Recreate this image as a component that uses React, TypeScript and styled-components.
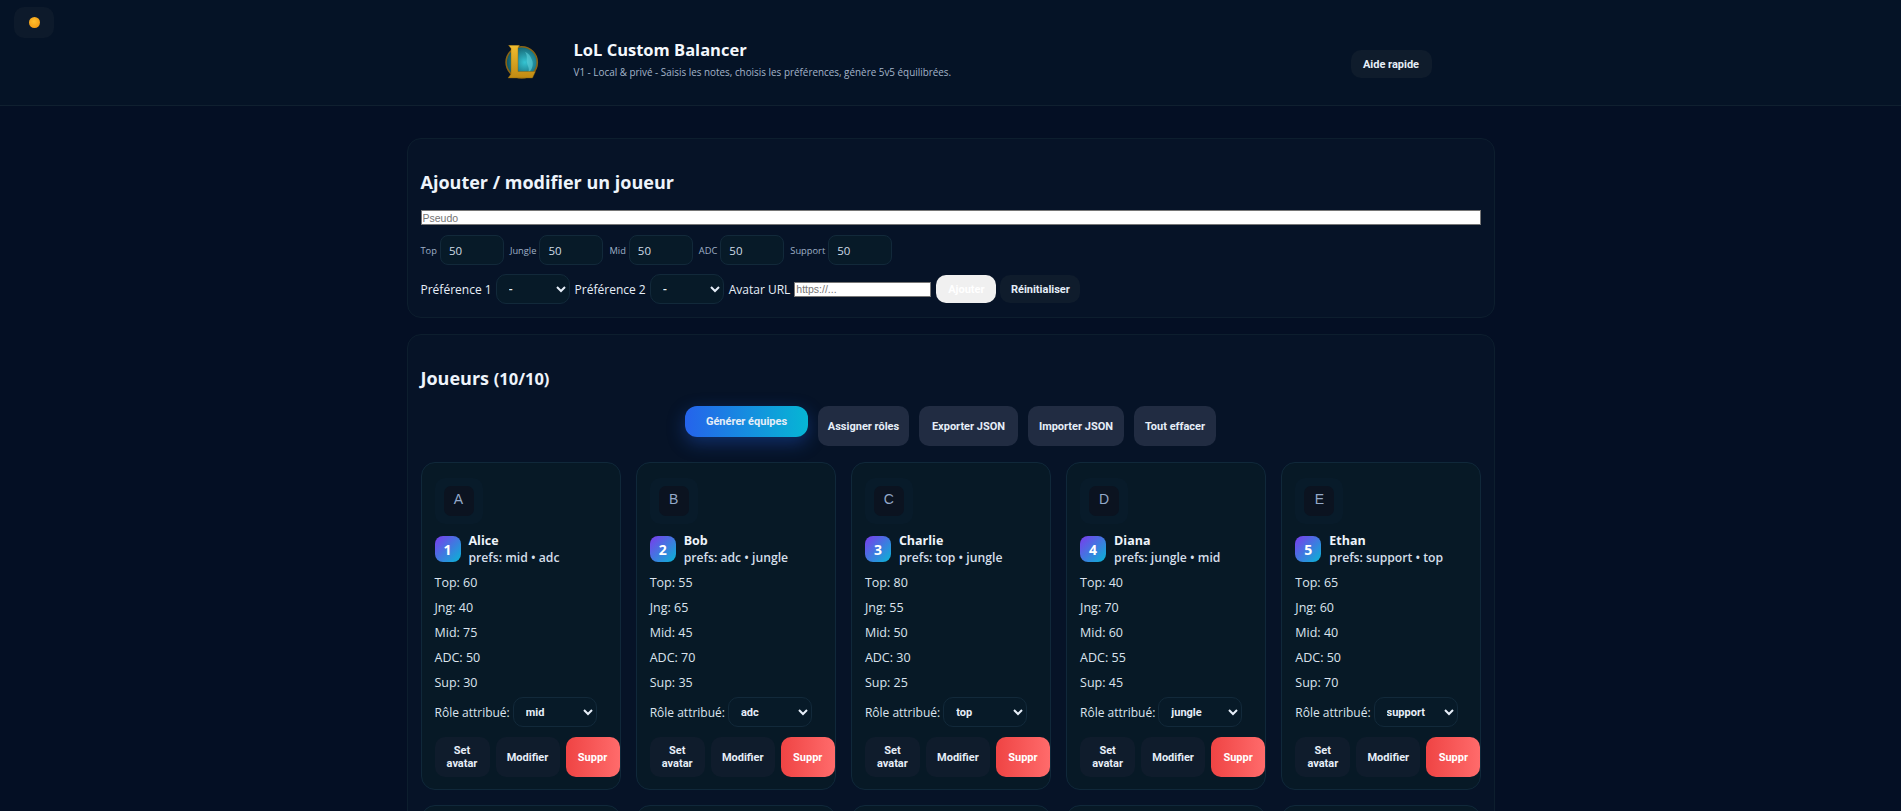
import React from "react";
import styled, { createGlobalStyle } from "styled-components";

const GlobalStyle = createGlobalStyle`
  * {
    box-sizing: border-box;
  }
  html {
    scrollbar-width: none;
  }
  body {
    margin: 0;
    background: #040f24;
    color: #e6eef8;
    font-family: "Open Sans", "Noto Sans", sans-serif;
    font-size: 13px;
  }
`;

const Header = styled.header`
  height: 106px;
  background: #051326;
  border-bottom: 1px solid #102030;
  display: flex;
  justify-content: center;
  padding-top: 38px;
`;

const HeaderInner = styled.div`
  width: 962px;
  display: flex;
  align-items: flex-start;
`;

const LogoBox = styled.div`
  width: 104px;
  height: 36px;
  margin-top: 7px;
  display: flex;
  justify-content: center;
`;

const HeaderText = styled.div`
  flex: 1;
`;

const Title = styled.h1`
  margin: 0;
  font-size: 16.5px;
  line-height: 24px;
  font-weight: 700;
  color: #f4f8fd;
`;

const Subtitle = styled.p`
  margin: 3px 0 0;
  font-size: 9.9px;
  line-height: 14px;
  color: #a3b3c9;
`;

const ThemeToggle = styled.button`
  position: fixed;
  top: 7px;
  left: 14px;
  width: 40px;
  height: 31px;
  border: none;
  border-radius: 10px;
  background: #0d1a2b;
  display: flex;
  align-items: center;
  justify-content: center;
  padding: 0;
`;

const ThemeDot = styled.span`
  width: 11px;
  height: 11px;
  border-radius: 50%;
  background: radial-gradient(circle at 45% 40%, #ffc02e, #ef8f0a);
`;

const Button = styled.button<{ $tone?: "dark" | "slate" | "primary" | "danger" | "ghost"; $w?: number }>`
  flex: none;
  border: none;
  font-family: Roboto, "Liberation Sans", Arial, sans-serif;
  font-size: 11px;
  font-weight: 700;
  line-height: 13px;
  padding: 0 10px;
  height: ${(p) => (p.$tone === "primary" ? "31px" : "40px")};
  width: ${(p) => (p.$w ? `${p.$w}px` : "auto")};
  border-radius: ${(p) => (p.$tone === "primary" ? "12px" : "10px")};
  color: #e6eef8;
  background: ${(p) =>
    p.$tone === "primary"
      ? "linear-gradient(90deg, #2563eb, #06b6d4)"
      : p.$tone === "slate"
        ? "#212c42"
        : p.$tone === "danger"
          ? "linear-gradient(90deg, #ef4444, #ff6b6b)"
          : p.$tone === "ghost"
            ? "#f0f0f0"
            : "#0f1c2c"};
  ${(p) => p.$tone === "primary" && "box-shadow: 0 6px 18px rgba(37, 99, 235, 0.35);"}
  ${(p) => p.$tone === "danger" && "color: #fff;"}
  ${(p) => p.$tone === "ghost" && "color: #fff;"}
`;

const HelpButton = styled(Button)`
  height: 28px;
  width: 81px;
  margin-top: 12px;
`;

const ToolButton = styled(Button)`
  padding: 0 4px;
  white-space: nowrap;
`;

const Main = styled.main`
  width: 1088px;
  margin: 32px auto 0;
  display: flex;
  flex-direction: column;
  gap: 16px;
`;

const Panel = styled.section`
  background: #061327;
  border: 1px solid #0d1e2e;
  border-radius: 14px;
  padding: 0 13px;
`;

const FormPanel = styled(Panel)`
  height: 180px;
  padding-top: 31px;
`;

const PlayersPanel = styled(Panel)`
  padding-top: 31px;
  padding-bottom: 20px;
`;

const SectionTitle = styled.h2`
  margin: 0;
  font-size: 18px;
  line-height: 24px;
  font-weight: 700;
  color: #eef4fb;
`;

const Count = styled.small`
  font-size: 16.5px;
`;

const PseudoInput = styled.input`
  display: block;
  width: 100%;
  height: 15px;
  margin-top: 16px;
  padding: 0 1px;
  border: 1px solid #767676;
  background: #fff;
  font-family: "Liberation Sans", Arial, sans-serif;
  font-size: 10.5px;
  &::placeholder {
    color: #757575;
  }
`;

const ScoreRow = styled.div`
  display: flex;
  align-items: center;
  margin-top: 10px;
`;

const ScoreLabel = styled.label`
  display: flex;
  align-items: center;
  gap: 3px;
  margin-right: 6px;
  font-size: 9.3px;
  color: #9fb0c6;
`;

const ScoreInput = styled.input`
  width: 64px;
  height: 30px;
  padding: 0 8px;
  border: 1px solid #12293a;
  border-radius: 8px;
  background: #071a28;
  color: #cfdae6;
  font-family: "Open Sans", sans-serif;
  font-size: 11.5px;
  &::-webkit-inner-spin-button {
    display: none;
  }
`;

const PrefRow = styled.div`
  display: flex;
  align-items: center;
  margin-top: 9px;
`;

const PrefLabel = styled.label`
  display: flex;
  align-items: center;
  gap: 4px;
  margin-right: 5px;
  font-size: 12px;
  color: #e6eef8;
`;

const Select = styled.select<{ $w: number }>`
  width: ${(p) => p.$w}px;
  height: 30px;
  padding: 0 8px;
  border: 1px solid #12293a;
  border-radius: 10px;
  background: #071a28;
  color: #e6eef8;
  font-family: Roboto, "Liberation Sans", Arial, sans-serif;
  font-size: 11px;
  font-weight: 700;
`;

const UrlInput = styled.input`
  width: 137px;
  height: 15px;
  padding: 0 1px;
  border: 1px solid #767676;
  background: #fff;
  font-family: "Liberation Sans", Arial, sans-serif;
  font-size: 10.5px;
`;

const SmallButton = styled(Button)`
  height: 28px;
  margin-right: 4px;
`;

const Toolbar = styled.div`
  display: flex;
  justify-content: center;
  align-items: flex-start;
  gap: 10px;
  margin-top: 15px;
`;

const CardGrid = styled.div`
  display: grid;
  grid-template-columns: repeat(5, minmax(0, 1fr));
  gap: 15px;
  margin: 16px -1px 0 0;
`;

const Card = styled.article`
  height: 328px;
  padding: 15px 13px 0;
  background: #071926;
  border: 1px solid #10283a;
  border-radius: 14px;
`;

const AvatarFrame = styled.div`
  width: 48px;
  height: 46px;
  border-radius: 10px;
  background: #081b2a;
  display: flex;
  align-items: center;
  justify-content: center;
`;

const AvatarLetter = styled.div`
  width: 30px;
  height: 30px;
  padding-bottom: 5px;
  border-radius: 7px;
  background: #0b1320;
  color: #93a9c9;
  font-family: "Liberation Sans", Arial, sans-serif;
  font-size: 14px;
  display: flex;
  align-items: center;
  justify-content: center;
`;

const PlayerHead = styled.div`
  display: flex;
  align-items: center;
  gap: 8px;
  margin-top: 8px;
`;

const Rank = styled.div`
  flex: none;
  width: 26px;
  height: 26px;
  border-radius: 8px;
  background: linear-gradient(135deg, #7c3aed, #06b6d4);
  color: #fff;
  font-weight: 700;
  font-size: 14px;
  display: flex;
  align-items: center;
  justify-content: center;
`;

const PlayerName = styled.div`
  font-size: 12.5px;
  line-height: 17px;
  font-weight: 700;
  color: #eef4fb;
`;

const Prefs = styled.div`
  font-size: 12.2px;
  line-height: 17px;
  font-weight: 600;
  color: #d5dfea;
  white-space: nowrap;
`;

const Stats = styled.div`
  margin-top: 4px;
`;

const Stat = styled.div`
  height: 25px;
  display: flex;
  align-items: center;
  font-size: 12.5px;
  color: #dbe4ee;
`;

const RoleRow = styled.label`
  display: flex;
  align-items: center;
  gap: 3px;
  margin-top: 2px;
  font-size: 12px;
  color: #dbe4ee;
  white-space: nowrap;
`;

const CardActions = styled.div`
  display: flex;
  gap: 6px;
  margin-top: 10px;
`;

const ROLES = ["top", "jungle", "mid", "adc", "support"];

const players = [
  { name: "Alice", prefs: "mid • adc", top: 60, jng: 40, mid: 75, adc: 50, sup: 30, role: "mid" },
  { name: "Bob", prefs: "adc • jungle", top: 55, jng: 65, mid: 45, adc: 70, sup: 35, role: "adc" },
  { name: "Charlie", prefs: "top • jungle", top: 80, jng: 55, mid: 50, adc: 30, sup: 25, role: "top" },
  { name: "Diana", prefs: "jungle • mid", top: 40, jng: 70, mid: 60, adc: 55, sup: 45, role: "jungle" },
  { name: "Ethan", prefs: "support • top", top: 65, jng: 60, mid: 40, adc: 50, sup: 70, role: "support" },
  { name: "Fiona", prefs: "mid • support", top: 50, jng: 45, mid: 70, adc: 40, sup: 60, role: "mid" },
  { name: "Gabe", prefs: "jungle • top", top: 60, jng: 75, mid: 35, adc: 45, sup: 40, role: "jungle" },
  { name: "Hugo", prefs: "adc • mid", top: 35, jng: 50, mid: 60, adc: 80, sup: 30, role: "adc" },
  { name: "Iris", prefs: "support • adc", top: 30, jng: 40, mid: 45, adc: 55, sup: 75, role: "support" },
  { name: "Jules", prefs: "top • mid", top: 70, jng: 50, mid: 55, adc: 35, sup: 40, role: "top" },
];

function LolLogo() {
  return (
    <svg width="34" height="36" viewBox="16 15 34 36" aria-hidden="true">
      <defs>
        <linearGradient id="gold" x1="0" y1="0" x2="0" y2="1">
          <stop offset="0" stopColor="#f0bd30" />
          <stop offset="1" stopColor="#c08a12" />
        </linearGradient>
        <radialGradient id="water" cx="0.6" cy="0.5" r="0.6">
          <stop offset="0" stopColor="#35c4d2" />
          <stop offset="1" stopColor="#0f5160" />
        </radialGradient>
      </defs>
      <circle cx="32.7" cy="32.3" r="15.6" fill="url(#water)" stroke="#8a6414" strokeWidth="1.6" />
      <path d="M36 22c3 4 1 7 2 11s3 6 1 10c4-3 6-8 4-13s-4-7-7-8z" fill="#5fd0da" opacity="0.6" />
      <path
        d="M19.5 15.2H30.5L29 18V41.5H46.5L43.5 48H19L22 44V18.5Z"
        fill="url(#gold)"
        stroke="#7d5a10"
        strokeWidth="0.4"
      />
    </svg>
  );
}

function PlayerCard({ player, index }: { player: (typeof players)[number]; index: number }) {
  return (
    <Card>
      <AvatarFrame>
        <AvatarLetter>{player.name[0]}</AvatarLetter>
      </AvatarFrame>
      <PlayerHead>
        <Rank>{index + 1}</Rank>
        <div>
          <PlayerName>{player.name}</PlayerName>
          <Prefs>prefs: {player.prefs}</Prefs>
        </div>
      </PlayerHead>
      <Stats>
        <Stat>Top: {player.top}</Stat>
        <Stat>Jng: {player.jng}</Stat>
        <Stat>Mid: {player.mid}</Stat>
        <Stat>ADC: {player.adc}</Stat>
        <Stat>Sup: {player.sup}</Stat>
      </Stats>
      <RoleRow>
        Rôle attribué:
        <Select $w={84} defaultValue={player.role}>
          {ROLES.map((role) => (
            <option key={role}>{role}</option>
          ))}
        </Select>
      </RoleRow>
      <CardActions>
        <Button $w={55}>Set avatar</Button>
        <Button $w={64}>Modifier</Button>
        <Button $tone="danger" $w={54}>
          Suppr
        </Button>
      </CardActions>
    </Card>
  );
}

export default function App() {
  return (
    <>
      <GlobalStyle />
      <ThemeToggle aria-label="Thème">
        <ThemeDot />
      </ThemeToggle>
      <Header>
        <HeaderInner>
          <LogoBox>
            <LolLogo />
          </LogoBox>
          <HeaderText>
            <Title>LoL Custom Balancer</Title>
            <Subtitle>V1 - Local &amp; privé - Saisis les notes, choisis les préférences, génère 5v5 équilibrées.</Subtitle>
          </HeaderText>
          <HelpButton>Aide rapide</HelpButton>
        </HeaderInner>
      </Header>
      <Main>
        <FormPanel>
          <SectionTitle>Ajouter / modifier un joueur</SectionTitle>
          <PseudoInput placeholder="Pseudo" />
          <ScoreRow>
            {["Top", "Jungle", "Mid", "ADC", "Support"].map((label) => (
              <ScoreLabel key={label}>
                {label}
                <ScoreInput type="number" defaultValue={50} />
              </ScoreLabel>
            ))}
          </ScoreRow>
          <PrefRow>
            <PrefLabel>
              Préférence 1
              <Select $w={74}>
                <option>-</option>
              </Select>
            </PrefLabel>
            <PrefLabel>
              Préférence 2
              <Select $w={74}>
                <option>-</option>
              </Select>
            </PrefLabel>
            <PrefLabel>
              Avatar URL
              <UrlInput placeholder="https://..." />
            </PrefLabel>
            <SmallButton $tone="ghost" $w={60}>
              Ajouter
            </SmallButton>
            <SmallButton $w={80}>Réinitialiser</SmallButton>
          </PrefRow>
        </FormPanel>
        <PlayersPanel>
          <SectionTitle>
            Joueurs <Count>(10/10)</Count>
          </SectionTitle>
          <Toolbar>
            <ToolButton $tone="primary" $w={123}>
              Générer équipes
            </ToolButton>
            <ToolButton $tone="slate" $w={91}>
              Assigner rôles
            </ToolButton>
            <ToolButton $tone="slate" $w={99}>
              Exporter JSON
            </ToolButton>
            <ToolButton $tone="slate" $w={96}>
              Importer JSON
            </ToolButton>
            <ToolButton $tone="slate" $w={82}>
              Tout effacer
            </ToolButton>
          </Toolbar>
          <CardGrid>
            {players.map((player, index) => (
              <PlayerCard key={player.name} player={player} index={index} />
            ))}
          </CardGrid>
        </PlayersPanel>
      </Main>
    </>
  );
}
